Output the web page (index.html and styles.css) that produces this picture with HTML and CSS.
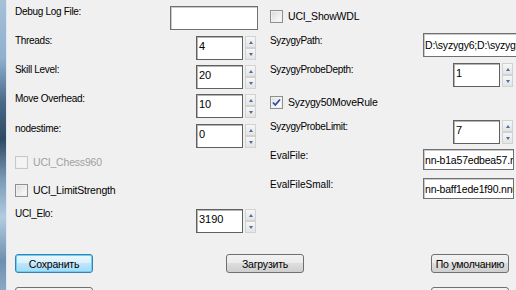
FILE: index.html
```html
<!DOCTYPE html>
<html>
<head>
    <meta charset="UTF-8">
    <title>Параметры движка</title>
    <link rel="stylesheet" href="styles.css">
</head>
<body>
<div class="window">
    <div class="frame-edge"></div>

    <div class="dialog">
        <div class="options">
            <!-- left column -->
            <div class="column column-left">
                <div class="row row-debug">
                    <span class="label">Debug Log File:</span>
                    <div class="textbox textbox-debug"></div>
                </div>
                <div class="row row-spin">
                    <span class="label">Threads:</span>
                    <div class="spinner"><div class="spin-box">4</div><div class="spin-buttons"><span class="spin-up"></span><span class="spin-down"></span></div></div>
                </div>
                <div class="row row-spin">
                    <span class="label">Skill Level:</span>
                    <div class="spinner"><div class="spin-box">20</div><div class="spin-buttons"><span class="spin-up"></span><span class="spin-down"></span></div></div>
                </div>
                <div class="row row-spin row-tall">
                    <span class="label">Move Overhead:</span>
                    <div class="spinner"><div class="spin-box">10</div><div class="spin-buttons"><span class="spin-up"></span><span class="spin-down"></span></div></div>
                </div>
                <div class="row row-spin">
                    <span class="label">nodestime:</span>
                    <div class="spinner"><div class="spin-box">0</div><div class="spin-buttons"><span class="spin-up"></span><span class="spin-down"></span></div></div>
                </div>
                <div class="row row-check row-chess">
                    <label class="check disabled"><span class="box"></span>UCI_Chess960</label>
                </div>
                <div class="row row-check row-limit">
                    <label class="check"><span class="box"></span>UCI_LimitStrength</label>
                </div>
                <div class="row row-spin row-elo">
                    <span class="label">UCI_Elo:</span>
                    <div class="spinner"><div class="spin-box">3190</div><div class="spin-buttons"><span class="spin-up"></span><span class="spin-down"></span></div></div>
                </div>
            </div>

            <!-- right column -->
            <div class="column column-right">
                <div class="row row-check row-wdl">
                    <label class="check"><span class="box"></span>UCI_ShowWDL</label>
                </div>
                <div class="row row-text row-path">
                    <span class="label">SyzygyPath:</span>
                    <div class="textbox textbox-wide">D:\syzygy6;D:\syzygy7</div>
                </div>
                <div class="row row-text row-depth">
                    <span class="label">SyzygyProbeDepth:</span>
                    <div class="spinner spinner-right"><div class="spin-box">1</div><div class="spin-buttons"><span class="spin-up"></span><span class="spin-down"></span></div></div>
                </div>
                <div class="row row-check row-rule">
                    <label class="check"><span class="box checked">
                        <svg viewBox="0 0 11 11" width="11" height="11"><path d="M2 5.5 L4.3 8 L9 2.5" fill="none" stroke="#2a4ab0" stroke-width="1.8"/></svg>
                    </span>Syzygy50MoveRule</label>
                </div>
                <div class="row row-text row-plimit">
                    <span class="label">SyzygyProbeLimit:</span>
                    <div class="spinner spinner-right"><div class="spin-box">7</div><div class="spin-buttons"><span class="spin-up"></span><span class="spin-down"></span></div></div>
                </div>
                <div class="row row-text row-eval">
                    <span class="label label-eval">EvalFile:</span>
                    <div class="textbox textbox-eval">nn-b1a57edbea57.nnue</div>
                </div>
                <div class="row row-text row-eval">
                    <span class="label label-eval">EvalFileSmall:</span>
                    <div class="textbox textbox-eval">nn-baff1ede1f90.nnue</div>
                </div>
            </div>
        </div>

        <div class="button-row">
            <button class="btn btn-default">Сохранить</button>
            <button class="btn btn-middle">Загрузить</button>
            <button class="btn btn-last">По умолчанию</button>
        </div>
        <div class="button-row button-row-last">
            <button class="btn">OK</button>
            <button class="btn btn-last">Отмена</button>
        </div>
    </div>
</div>
</body>
</html>
```

FILE: styles.css
```css
body {
    margin: 0;
    overflow: hidden;
    font-family: 'Liberation Sans', Arial, sans-serif;
    font-size: 10px;
    letter-spacing: -0.3px;
    color: #000;
    background-color: #f0f0f0;
}

.window {
    display: flex;
    height: 290px;
    width: 516px;
    overflow: hidden;
}

.frame-edge {
    width: 6px;
    flex-shrink: 0;
    background: linear-gradient(to bottom, #a7c0d8 0%, #8fb0cf 20%, #4a6a88 35%, #2f4a64 48%, #7b9bb8 62%, #b3cbe0 75%, #6e8fae 90%, #8aa9c6 100%);
    border-right: 1px solid #dfe8f0;
}

.dialog {
    flex: 1;
    min-width: 0;
    background-color: #f0f0f0;
    padding-left: 8px;
}

.options {
    display: flex;
    height: 248px;
}

.column {
    display: flex;
    flex-direction: column;
}

.column-left {
    width: 243px;
    padding-top: 6px;
    margin-right: 12px;
}

.column-right {
    flex: 1;
    min-width: 0;
    padding-top: 6px;
}

.row {
    display: flex;
    align-items: flex-start;
    justify-content: space-between;
    flex-shrink: 0;
}

.label {
    line-height: 12px;
    white-space: nowrap;
}

/* left rows */
.row-debug { height: 30px; }
.row-spin { height: 29px; }
.row-tall { height: 30px; }
.row-spin .label { margin-top: -1px; }
.row-chess { height: 28px; padding-top: 3px; box-sizing: border-box; }
.row-limit { height: 25px; padding-top: 3px; box-sizing: border-box; }
.row-elo { height: 30px; padding-top: 3px; box-sizing: border-box; }

/* right rows */
.row-text {
    display: grid;
    grid-template-columns: 153px 1fr;
}
.row-wdl { height: 27px; padding-top: 4px; box-sizing: border-box; }
.row-path { height: 30px; }
.row-path .label { margin-top: 2px; }
.row-depth { height: 31px; }
.row-depth .label { margin-top: 1px; }
.row-rule { height: 26px; padding-top: 2px; box-sizing: border-box; }
.row-plimit { height: 29px; }
.row-plimit .label { margin-top: 1px; }
.row-eval { height: 29px; }
.label-eval { margin-top: 1px; letter-spacing: 0; }

.textbox {
    box-sizing: border-box;
    background-color: #fff;
    border: 1px solid #707070;
    box-shadow: inset 1px 1px 0 #c9c9c9;
    white-space: nowrap;
    overflow: hidden;
    line-height: 12px;
    padding: 5px 0 0 1px;
    font-size: 10.5px;
    letter-spacing: -0.2px;
}

.textbox-debug {
    width: 88px;
    height: 24px;
}

.textbox-wide {
    width: 110px;
    height: 24px;
}

.textbox-eval {
    width: 91px;
    height: 21px;
    padding-top: 4px;
}

.spinner {
    display: flex;
    gap: 2px;
    margin-right: 2px;
}

.spinner-right {
    margin-left: 30px;
    margin-right: 0;
}

.spin-box {
    box-sizing: border-box;
    width: 47px;
    height: 24px;
    background-color: #fff;
    border: 1px solid #606060;
    box-shadow: inset 1px 1px 0 #b4b4b4;
    font-size: 11px;
    letter-spacing: 0;
    line-height: 12px;
    padding: 3px 0 0 2px;
}

.spin-buttons {
    display: flex;
    flex-direction: column;
    width: 11px;
    height: 24px;
}

.spin-up,
.spin-down {
    flex: 1;
    box-sizing: border-box;
    border: 1px solid #d2d2d2;
    background: linear-gradient(to bottom, #f6f6f6, #e4e4e4);
    display: flex;
    align-items: center;
    justify-content: center;
}

.spin-up::after,
.spin-down::after {
    content: '';
    border-left: 2.5px solid transparent;
    border-right: 2.5px solid transparent;
}

.spin-up::after {
    border-bottom: 3px solid #4d6f9c;
}

.spin-down::after {
    border-top: 3px solid #4d6f9c;
}

.check {
    display: flex;
    align-items: center;
    gap: 5px;
    line-height: 13px;
    font-size: 10.5px;
    letter-spacing: -0.2px;
}

.check .box {
    box-sizing: border-box;
    width: 13px;
    height: 13px;
    border: 1px solid #8e8f8f;
    background: linear-gradient(135deg, #d8d8d8, #f4f4f4 70%);
    box-shadow: inset 0 0 0 1px #f0f0f0;
    display: flex;
    align-items: center;
    justify-content: center;
}

.check .box.checked {
    background: linear-gradient(135deg, #dcdcdc, #fafafa 70%);
}

.check.disabled {
    color: #a0a0a0;
}

.check.disabled .box {
    border-color: #c8c8c8;
    background: #f4f4f4;
}

.button-row {
    display: flex;
    padding-top: 6px;
    width: 494px;
}

.button-row-last {
    padding-top: 14px;
}

.btn {
    box-sizing: border-box;
    width: 78px;
    height: 19px;
    padding: 0;
    border: 1px solid #707070;
    border-radius: 3px;
    background: linear-gradient(to bottom, #f2f2f2 0%, #ebebeb 49%, #dddddd 50%, #cfcfcf 100%);
    font-family: 'Liberation Sans', Arial, sans-serif;
    font-size: 10.5px;
    letter-spacing: -0.2px;
    color: #000;
}

.btn-middle {
    margin-left: 133px;
}

.btn-last {
    margin-left: auto;
}

.btn-default {
    border-color: #3c7fb1;
    box-shadow: inset 0 0 0 1px #63d3f5;
    background: linear-gradient(to bottom, #eaf6fd 0%, #d9f0fc 49%, #bee6fd 50%, #a7d9f5 100%);
}
```
